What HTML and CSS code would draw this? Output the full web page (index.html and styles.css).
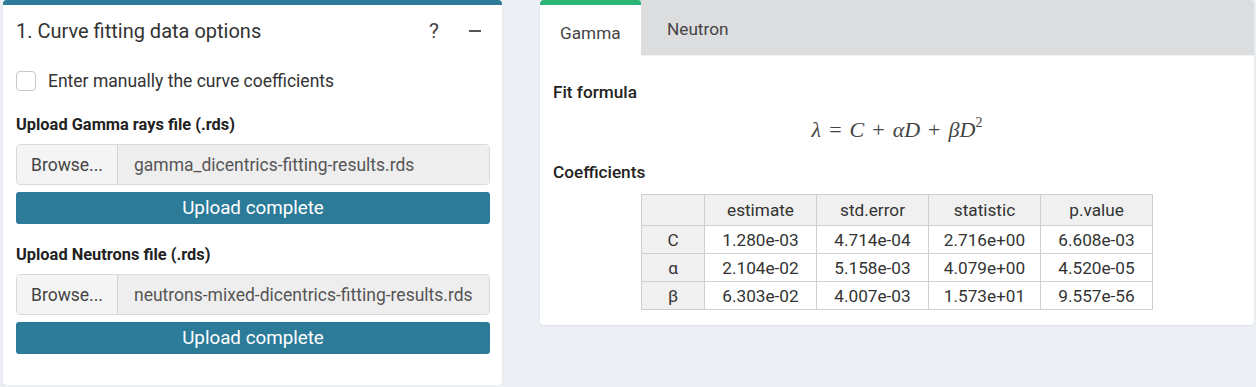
FILE: index.html
```html
<!DOCTYPE html>
<html>
<head>
<meta charset="utf-8">
<link rel="stylesheet" href="styles.css">
</head>
<body>
<div class="page">
  <section class="box">
    <div class="box-header">
      <h3 class="box-title">1. Curve fitting data options</h3>
      <div class="box-tools">
        <span class="tool help">?</span>
        <span class="tool minus"></span>
      </div>
    </div>
    <div class="box-body">
      <label class="check-row"><span class="checkbox"></span><span>Enter manually the curve coefficients</span></label>

      <div class="field">
        <div class="field-label">Upload Gamma rays file (.rds)</div>
        <div class="input-group">
          <span class="browse">Browse...</span>
          <span class="filename">gamma_dicentrics-fitting-results.rds</span>
        </div>
        <div class="progress">Upload complete</div>
      </div>

      <div class="field">
        <div class="field-label">Upload Neutrons file (.rds)</div>
        <div class="input-group">
          <span class="browse">Browse...</span>
          <span class="filename">neutrons-mixed-dicentrics-fitting-results.rds</span>
        </div>
        <div class="progress">Upload complete</div>
      </div>
    </div>
  </section>

  <section class="tabbox">
    <div class="tabs">
      <div class="tab active">Gamma</div>
      <div class="tab">Neutron</div>
    </div>
    <div class="tab-content">
      <h4 class="sub">Fit formula</h4>
      <div class="formula"><span class="mi">λ</span><span class="mo">=</span><span class="mi">C</span><span class="mo">+</span><span class="mi">αD</span><span class="mo">+</span><span class="mi">βD</span><sup class="sup">2</sup></div>
      <h4 class="sub">Coefficients</h4>
      <table class="coef">
        <thead>
          <tr><th class="rh"></th><th>estimate</th><th>std.error</th><th>statistic</th><th>p.value</th></tr>
        </thead>
        <tbody>
          <tr><th class="rh">C</th><td>1.280e-03</td><td>4.714e-04</td><td>2.716e+00</td><td>6.608e-03</td></tr>
          <tr><th class="rh">α</th><td>2.104e-02</td><td>5.158e-03</td><td>4.079e+00</td><td>4.520e-05</td></tr>
          <tr><th class="rh">β</th><td>6.303e-02</td><td>4.007e-03</td><td>1.573e+01</td><td>9.557e-56</td></tr>
        </tbody>
      </table>
    </div>
  </section>
</div>
</body>
</html>
```

FILE: styles.css
```css
html, body {
  margin: 0;
  padding: 0;
  background: #ecf0f5;
  font-family: Roboto, "Liberation Sans", sans-serif;
  color: #333;
}

.page {
  display: grid;
  grid-template-columns: 499px 714px;
  column-gap: 38px;
  align-items: start;
  padding-left: 3px;
}

/* left box */
.box {
  background: #fff;
  border-top: 5px solid #2b7b99;
  border-radius: 4px;
  box-shadow: 0 1px 2px rgba(0, 0, 0, 0.08);
  height: 380px;
}

.box-header {
  display: flex;
  align-items: center;
  justify-content: space-between;
  padding: 14px 13px 14px 13px;
}

.box-title {
  margin: 0;
  font-size: 20px;
  line-height: 24px;
  font-weight: 400;
  color: #333;
}

.box-tools {
  display: flex;
  align-items: center;
  padding-right: 8px;
}

.tool {
  display: inline-block;
  color: #444;
}

.help {
  font-size: 21px;
  width: 20px;
  text-align: center;
  margin-right: 25px;
}

.minus {
  width: 12px;
  height: 2px;
  background: #555;
}

.box-body {
  padding: 0 12px 0 13px;
}

.check-row {
  display: flex;
  align-items: center;
  gap: 12px;
  margin-top: 14px;
  font-size: 17.5px;
  line-height: 20px;
  height: 20px;
}

.checkbox {
  width: 18px;
  height: 18px;
  border: 1px solid #c8c8c8;
  border-radius: 4px;
  background: #fff;
}

.field {
  margin-top: 23px;
}

.field + .field {
  margin-top: 20px;
}

.field-label {
  font-size: 16.4px;
  font-weight: 700;
  line-height: 22px;
  color: #222;
}

.input-group {
  display: flex;
  margin-top: 8px;
  height: 41px;
  border: 1px solid #dadada;
  border-radius: 4px;
  box-sizing: border-box;
  font-size: 17.5px;
  color: #444;
  overflow: hidden;
}

.browse {
  width: 100px;
  display: flex;
  align-items: center;
  justify-content: center;
  background: #f4f4f4;
  border-right: 1px solid #d4d4d4;
  flex: none;
}

.filename {
  flex: 1;
  display: flex;
  align-items: center;
  padding-left: 16px;
  background: #eeeeee;
  white-space: nowrap;
  color: #555;
}

.progress {
  margin-top: 7px;
  height: 32px;
  line-height: 32px;
  background: #2b7b99;
  color: #fff;
  text-align: center;
  font-size: 18.8px;
  border-radius: 3px;
}

/* right tab box */
.tabbox {
  background: #fff;
  border-radius: 4px;
  box-shadow: 0 1px 2px rgba(0, 0, 0, 0.08);
  height: 325px;
  overflow: hidden;
}

.tabs {
  display: flex;
  height: 56px;
  background: #dcdddf;
  border-bottom: 1px solid #f2f2f2;
  box-sizing: border-box;
}

.tab {
  padding: 3px 26px 0 26px;
  font-size: 17.2px;
  line-height: 18px;
  color: #444;
  display: flex;
  align-items: center;
}

.tab.active {
  background: #fff;
  border-top: 5px solid #2ab576;
  border-top-left-radius: 3px;
  border-top-right-radius: 3px;
  padding: 4px 20px 0 20px;
  width: 61px;
  margin-bottom: -1px;
}

.tab-content {
  padding: 25px 13px 0 13px;
}

.sub {
  margin: 0;
  font-size: 17.2px;
  font-weight: 500;
  line-height: 22px;
  color: #222;
}

.formula {
  text-align: center;
  font-family: "Liberation Serif", "DejaVu Serif", serif;
  font-size: 22px;
  color: #444;
  line-height: 28px;
  margin: 13px 0 17px 0;
}

.mi {
  font-style: italic;
}

.mo {
  margin: 0 8px;
  font-style: normal;
}

.sup {
  font-size: 14px;
  vertical-align: 10px;
  line-height: 0;
}

.coef {
  margin: 11px auto 0 auto;
  border-collapse: collapse;
  font-size: 17.2px;
  color: #333;
}

.coef th,
.coef td {
  border: 1px solid #cfcfcf;
  text-align: center;
  font-weight: 400;
  padding: 0;
  width: 111px;
  height: 27px;
}

.coef thead th {
  background: #f0f0f0;
  height: 30px;
}

.coef th.rh {
  background: #f0f0f0;
  width: 62px;
}
```
